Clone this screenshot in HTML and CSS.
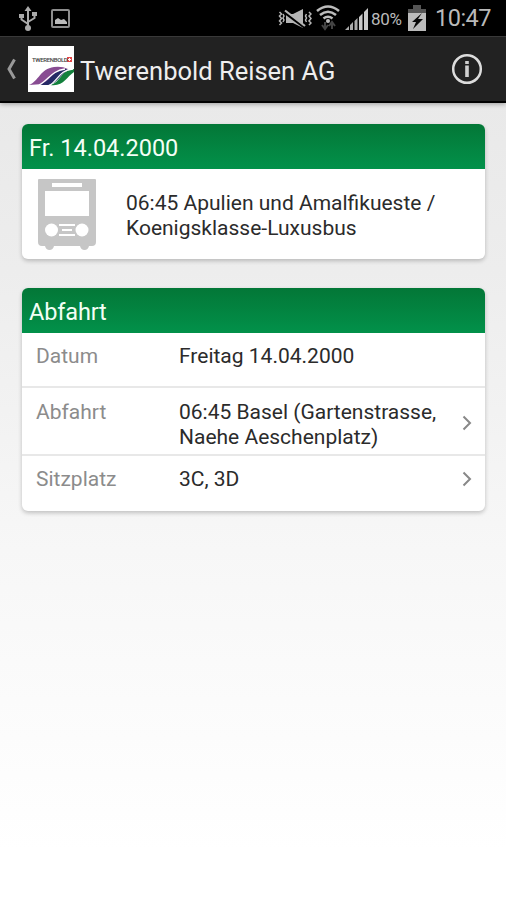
FILE: index.html
```html
<!DOCTYPE html>
<html lang="de">
<head>
<meta charset="utf-8">
<title>Twerenbold Reisen AG</title>
<link rel="stylesheet" href="styles.css">
</head>
<body>
<div class="status">
  <svg class="usb" width="18" height="26" viewBox="0 0 18 26" fill="none" stroke="#aaa" stroke-width="2"><path d="M9 4v18M2.500 9v4.500L9 18M15.500 8v4L9 16"/><path d="M9 0l3.500 5h-7zM0 8h5v4H0zM13 6h5v4h-5z" fill="#aaa" stroke="none"/><circle cx="9" cy="22" r="3" fill="#aaa" stroke="none"/></svg>
  <svg class="photo" width="20" height="20" viewBox="0 0 20 20"><rect x="1" y="1" width="17" height="17" rx="1" fill="none" stroke="#8d8d8d" stroke-width="2"/><path d="M4 15v-4l3-2 3 2 3-1 3 3v2z" fill="#bbb"/></svg>
  <svg class="mute" width="34" height="20" viewBox="0 0 34 20" fill="none" stroke="#b5b5b5" stroke-width="1.500"><path d="M1.500 3l2 2-2 2 2 2.500-2 2.500 2 2-2 2M5 5l1 2-1 2 1 2-1 2M28.500 5l-1 2 1 2-1 2 1 2M31 3l2 2-2 2 2 2.500-2 2.500 2 2-2 2"/><path d="M8 5h7l10-5v19l-10-5H8z" fill="#b5b5b5" stroke="none"/><path d="M7 3.500l20 15" stroke="#000" stroke-width="3"/><path d="M7 1.500l20 15.500" stroke-width="2.200"/></svg>
  <svg class="wifi" width="24" height="26" viewBox="0 0 24 26" fill="none" stroke="#bcbcbc" stroke-width="2.600"><path d="M1 6Q12-3 23 6M4 10q8-6.500 16 0M7.500 13.500q4.500-3.500 9 0"/><circle cx="12" cy="16" r="2" fill="#bcbcbc" stroke="none"/><path d="M9 17v6M6 20l3 4 3-4M16 24v-6M13 21l3-4 3 4" stroke="#444" stroke-width="2"/></svg>
  <svg class="signal" width="24" height="23" viewBox="0 0 24 23" fill="#aaa"><path d="M0 23l4-4v4zM5 18l3-3v8H5zM9.500 14l3-3v12h-3z"/><path d="M14 10l3.500-3.500V23H14zM19 5l4-4v22h-4z" fill="#c9c9c9"/></svg>
  <span class="percent">80%</span>
  <svg class="battery" width="18" height="27" viewBox="0 0 18 27"><path d="M5 0h8v4h5v5H0V4h5z" fill="#555"/><path d="M0 8h18v18H0z" fill="#bbb"/><path d="M14 8L4 17h4l-3 7 10-10h-5l4-6z" fill="#080808"/></svg>
  <span class="clock">10:47</span>
</div>
<header class="bar">
  <svg class="back" width="12" height="22" viewBox="0 0 12 22"><path d="M10.500 1.500L5 11l5.500 9.500" fill="none" stroke="#999" stroke-width="3"/></svg>
  <div class="logo">
    <span class="brand">TWERENBOLD</span>
    <svg width="46" height="46" viewBox="0 0 46 46"><rect x="39" y="11" width="5" height="5" fill="#e34848"/><path d="M41.500 12v3M40 13.500h3" stroke="#fff"/><path d="M1 39C11 35 12 23 26 21q8-1 14 2C29 23 23 34 15 38z" fill="#884c92"/><path d="M11 39c11-3 13-14 25-16l7 0C32 27 30 38 20 39z" fill="#252965"/><path d="M22 39C33 37 32 24 46 23v3C38 31 36 41 22 39z" fill="#13803c"/><path d="M11 39C21 34 23 25 37 23M21 39.500C30 35 31 24 45 23" fill="none" stroke="#fff" stroke-width="1.300"/></svg>
  </div>
  <h1>Twerenbold Reisen AG</h1>
  <svg class="info" width="32" height="32" viewBox="0 0 32 32"><circle cx="16" cy="16" r="13.800" fill="none" stroke="#ddd" stroke-width="2.500"/><path d="M14.200 8h3.600v3h-3.600zM14.200 12.500h3.600v11.500h-3.600z" fill="#d0d0d0"/></svg>
</header>
<main>
  <section class="card">
    <h2>Fr. 14.04.2000</h2>
    <div class="trip">
      <svg width="58" height="72" viewBox="0 0 58 72"><path d="M1 0h56q1 0 1 1v62q0 4-4 4h-3q-1 4-4.500 4T42 67H16q-1 4-4.500 4T7 67H4q-4 0-4-4V1q0-1 1-1z" fill="#c6c6c6"/><g fill="#fff"><rect x="14" y="4" width="30" height="4"/><rect x="7" y="12" width="44" height="25"/><circle cx="13.500" cy="51" r="6.500"/><circle cx="44" cy="51" r="6.500"/><path d="M21 45h16v2H21zM24 50h10v2H24zM21 55h16v2H21z"/></g></svg>
      <p>06:45 Apulien und Amalfikueste /<br>Koenigsklasse-Luxusbus</p>
    </div>
  </section>
  <section class="card">
    <h2 class="tight">Abfahrt</h2>
    <dl>
      <div class="row date"><dt>Datum</dt><dd>Freitag 14.04.2000</dd></div>
      <div class="row stop"><dt>Abfahrt</dt><dd>06:45 Basel (Gartenstrasse,<br>Naehe Aeschenplatz)</dd><svg width="10" height="16" viewBox="0 0 10 16"><path d="M1.500 1.500L8 8l-6.500 6.500"/></svg></div>
      <div class="row seat"><dt>Sitzplatz</dt><dd>3C, 3D</dd><svg width="10" height="16" viewBox="0 0 10 16"><path d="M1.500 1.500L8 8l-6.500 6.500"/></svg></div>
    </dl>
  </section>
</main>
</body>
</html>
```
FILE: styles.css
```css
* { box-sizing: border-box; }
body { margin: 0; height: 900px; overflow: hidden; font-family: Roboto, sans-serif; background: linear-gradient(#e9e9e9 100px, #ededed 270px, #f7f7f7 550px, #fff 850px); }
h1, h2, p, dl, dd, dt { margin: 0; font-weight: 400; }
svg { display: block; flex: none; }
.status { display: flex; height: 36px; padding: 0 16px 0 19px; background: #000; color: #bababa; }
.usb { margin-top: 6px; }
.photo { margin: 9px 0 0 14px; }
.mute { margin: 9px 0 0 auto; }
.wifi { margin: 5px 0 0 4px; }
.signal { margin: 7px 0 0 5px; }
.percent { margin-left: 2px; font-size: 17px; line-height: 38px; width: 34px; letter-spacing: -0.3px; }
.battery { margin: 5px 0 0 3px; }
.clock { margin-left: 9px; width: 55px; font-size: 23.500px; line-height: 37px; letter-spacing: -0.5px; }
.bar { display: flex; align-items: center; height: 67px; padding: 0 23px 0 4px; background: #222; border-top: 1px solid #393939; border-bottom: 2px solid #000; box-shadow: 0 1px 5px rgba(0, 0, 0, .35); color: #eee; }
.logo { position: relative; width: 46px; height: 46px; margin-left: 12px; background: #fff; }
.brand { position: absolute; left: 4px; top: 10px; font-size: 6px; line-height: 7px; font-weight: 500; color: #444; white-space: nowrap; letter-spacing: -0.350px; }
.bar h1 { margin: 4px 0 0 6px; font-size: 25.500px; line-height: 30px; white-space: nowrap; }
.info { margin-left: auto; }
main { display: flex; flex-direction: column; gap: 29px; padding: 21px 21px 0 22px; }
.card { background: #fff; border-radius: 6px; overflow: hidden; box-shadow: 0 2px 4px rgba(0, 0, 0, .22); }
.card h2 { height: 45px; padding-left: 7px; background: linear-gradient(#037737, #02914a); color: #f3fff5; font-size: 23.500px; line-height: 48px; white-space: nowrap; }
.card .tight { letter-spacing: -0.15px; }
.trip { display: flex; height: 90px; padding: 10px 0 0 16px; }
.trip p { margin: 12px 0 0 30px; }
p, dt, dd { font-size: 21px; line-height: 25px; color: #2b2b2b; white-space: nowrap; }
.row { display: flex; align-items: flex-start; padding: 11px 13px 0 14px; border-bottom: 2px solid #e8e8e8; }
.row dt { width: 143px; color: #8c8c8c; }
.row svg { margin: 15px 0 0 auto; fill: none; stroke: #888; stroke-width: 2; }
.date { height: 55px; }
.stop { height: 68px; padding-top: 12px; }
.seat { height: 55px; border: 0; }
.seat svg { margin-top: 4px; }
```
